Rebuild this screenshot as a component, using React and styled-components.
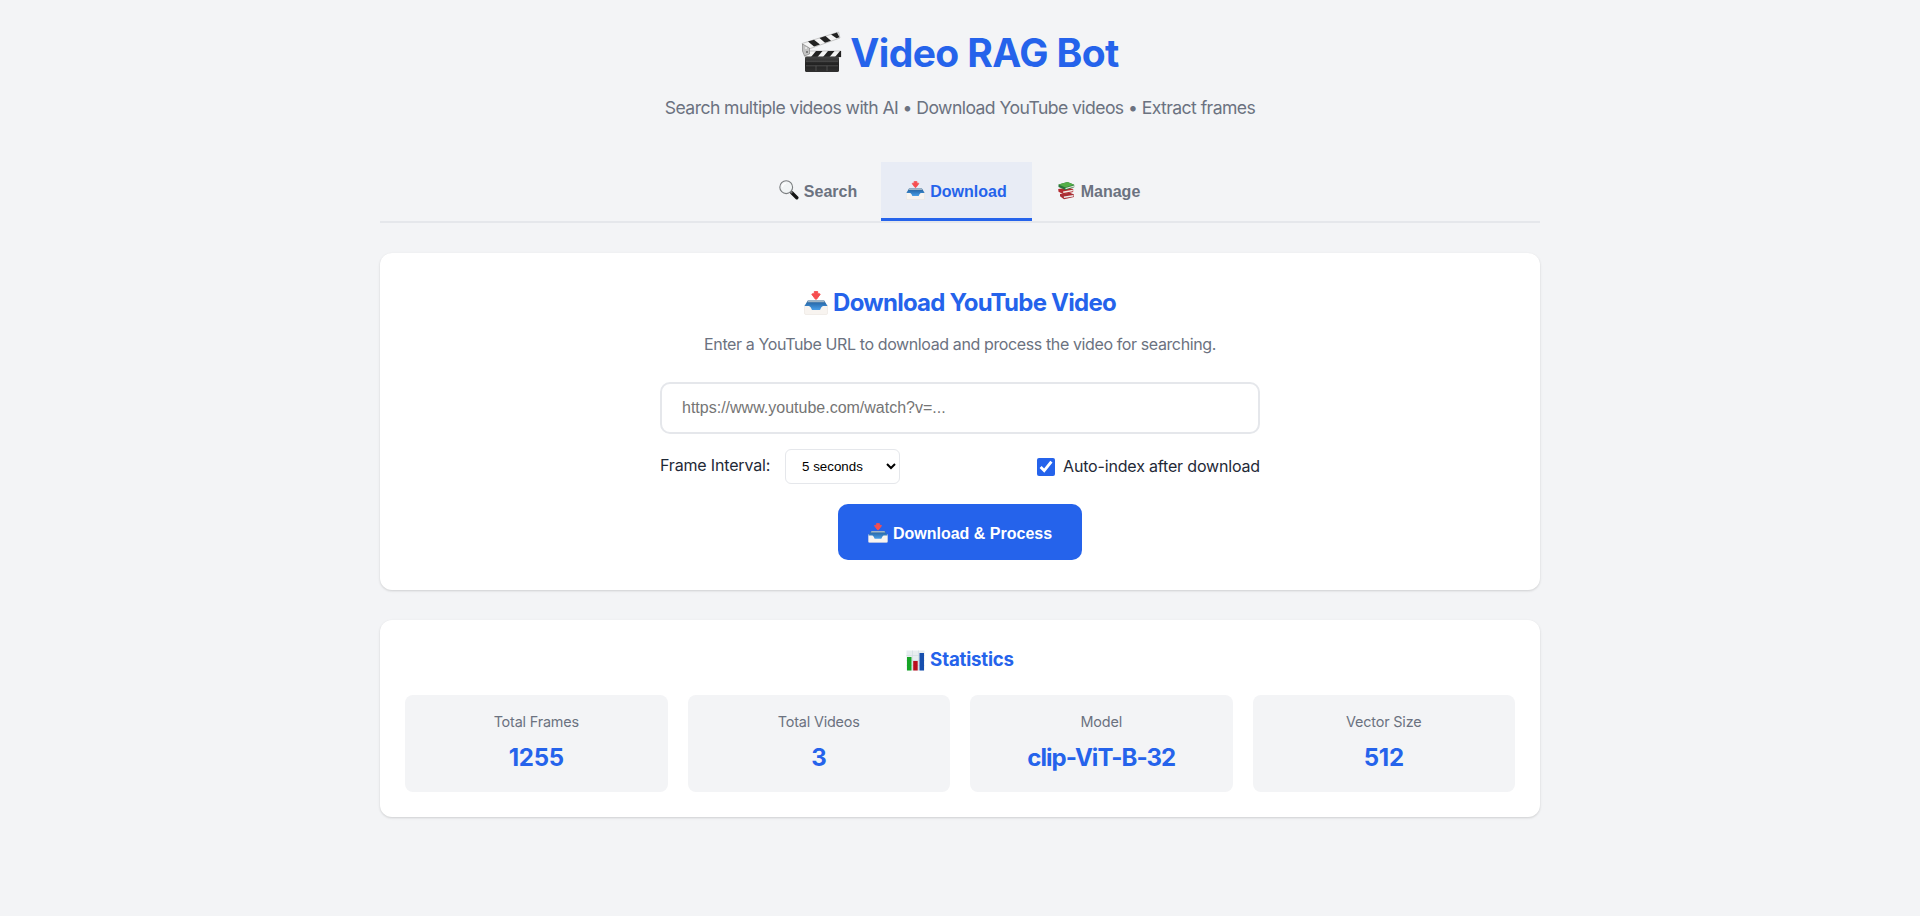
import React from 'react';
import styled, { createGlobalStyle } from 'styled-components';

const GlobalStyle = createGlobalStyle`
  * { box-sizing: border-box; margin: 0; padding: 0; }
  body {
    background: #f3f4f6;
    color: #1f2937;
    font-family: Inter, "Liberation Sans", sans-serif;
    font-size: 16px;
    line-height: 1.6;
    min-height: 100vh;
  }
`;

const Container = styled.div`
  width: 1200px;
  margin: 0 auto;
  padding: 20px;
`;

const Header = styled.header`
  display: flex;
  flex-direction: column;
  align-items: center;
  gap: 10px;
  margin-bottom: 40px;
`;

const Title = styled.h1`
  display: flex;
  align-items: center;
  gap: 8px;
  height: 64px;
  font-size: 39px;
  font-weight: 700;
  letter-spacing: -0.6px;
  color: #2563eb;
  white-space: nowrap;
  span { padding-top: 2px; }
`;

const Subtitle = styled.p`
  font-size: 17.6px;
  line-height: 28px;
  letter-spacing: -0.57px;
  color: #6b7280;
  white-space: nowrap;
`;

const Tabs = styled.nav`
  display: flex;
  justify-content: center;
  border-bottom: 2px solid #e5e7eb;
  margin-bottom: 30px;
`;

const Tab = styled.button`
  display: flex;
  align-items: center;
  justify-content: center;
  gap: 5px;
  width: ${(p) => p.$width}px;
  height: 59px;
  border: none;
  border-bottom: 3px solid ${(p) => (p.$active ? '#2563eb' : 'transparent')};
  background: ${(p) => (p.$active ? 'rgba(37, 99, 235, 0.05)' : 'transparent')};
  color: ${(p) => (p.$active ? '#2563eb' : '#6b7280')};
  font: 700 16px "Liberation Sans", sans-serif;
  span { padding-top: 3px; }
`;

const Card = styled.section`
  display: flex;
  flex-direction: column;
  align-items: center;
  padding: ${(p) => p.$padding}px;
  margin-bottom: 30px;
  background: #fff;
  border-radius: 12px;
  box-shadow: 0 1px 3px rgba(0, 0, 0, 0.1), 0 1px 2px rgba(0, 0, 0, 0.06);
`;

const CardTitle = styled.h2`
  display: flex;
  align-items: center;
  gap: 5px;
  height: 39px;
  margin-bottom: 10px;
  font-size: 24px;
  font-weight: 700;
  letter-spacing: -0.76px;
  color: #2563eb;
  span { padding-top: 1px; }
`;

const Description = styled.p`
  line-height: 25px;
  margin-bottom: 25px;
  letter-spacing: -0.385px;
  color: #6b7280;
  white-space: nowrap;
`;

const Form = styled.form`
  display: flex;
  flex-direction: column;
  align-items: center;
  width: 600px;
`;

const UrlInput = styled.input`
  width: 100%;
  height: 52px;
  padding: 0 20px;
  border: 2px solid #e5e7eb;
  border-radius: 10px;
  background: #fff;
  font: 16px "Liberation Sans", sans-serif;
  &::placeholder { color: #757575; }
`;

const Options = styled.div`
  display: flex;
  justify-content: space-between;
  align-items: center;
  width: 100%;
  height: 35px;
  margin: 15px 0 20px;
`;

const Field = styled.label`
  display: flex;
  align-items: center;
  gap: ${(p) => p.$gap}px;
  letter-spacing: -0.17px;
  white-space: nowrap;
`;

const FieldName = styled.span`
  padding-bottom: 2px;
`;

const Select = styled.select`
  width: 115px;
  height: 35px;
  padding: 0 12px;
  border: 1px solid #e5e7eb;
  border-radius: 6px;
  background: #fff;
  color: #000;
  font: 13.333px "Liberation Sans", sans-serif;
`;

const Checkbox = styled.input`
  width: 18px;
  height: 18px;
  accent-color: #2563eb;
`;

const SubmitButton = styled.button`
  display: flex;
  align-items: center;
  justify-content: center;
  gap: 5px;
  width: 244px;
  height: 56px;
  border: none;
  border-radius: 10px;
  background: #2563eb;
  color: #fff;
  font: 700 16px "Liberation Sans", sans-serif;
  padding-top: 1px;
  span { padding-top: 2px; }
`;

const StatsTitle = styled.h3`
  display: flex;
  align-items: center;
  gap: 5px;
  height: 30px;
  margin-bottom: 20px;
  font-size: 18.7px;
  font-weight: 700;
  letter-spacing: -0.2px;
  color: #2563eb;
`;

const StatsGrid = styled.div`
  display: grid;
  grid-template-columns: repeat(4, 1fr);
  gap: 20px;
  width: 100%;
`;

const Stat = styled.div`
  padding: 15px;
  border-radius: 8px;
  background: #f3f4f6;
  text-align: center;
`;

const StatLabel = styled.div`
  font-size: 14.4px;
  line-height: 23px;
  margin-bottom: 5px;
  letter-spacing: -0.18px;
  color: #6b7280;
`;

const StatValue = styled.div`
  font-size: 24px;
  line-height: 39px;
  font-weight: 700;
  letter-spacing: ${(p) => (p.$numeric ? '-0.3px' : '-0.95px')};
  color: #2563eb;
`;

const Icon = styled.svg`
  flex: none;
  display: block;
`;

function ClapperIcon() {
  return (
    <Icon width="41" height="42" viewBox="0 0 41 42">
      <defs>
        <linearGradient id="slate" x1="0" y1="0" x2="0" y2="1">
          <stop offset="0" stopColor="#444" />
          <stop offset="0.5" stopColor="#222" />
          <stop offset="1" stopColor="#303030" />
        </linearGradient>
      </defs>
      <path d="M1 12.5 37.5 1l1.5 6L5 19z" fill="#f4f4f4" stroke="#999" strokeWidth=".5" />
      <path d="m7 10.6 6-1.9 6 4.8-6 2zM18.5 7l6-1.9 5.5 4.6-6 2zM30 3.4l6-1.9 2.5 4.8-3 1z" fill="#222" />
      <path d="M4 20h36v6H4z" fill="#f4f4f4" stroke="#999" strokeWidth=".5" />
      <path d="m10 26 5-6h6.5l-5 6zm12 0 5-6h6.5l-5 6zm12 0 5-6h1v6z" fill="#222" />
      <path d="m1.5 13 7 4v6l-5 2-2-5z" fill="#c2c2c2" stroke="#777" strokeWidth=".6" />
      <circle cx="5" cy="17" r="1" fill="#eee" /><circle cx="6" cy="21" r="1" fill="#666" />
      <rect x="4" y="25.5" width="34" height="15.5" rx="1.6" fill="url(#slate)" />
      <path d="M5 30.2h32M5 34.8h32M15 34.8v5M26 34.8v5" stroke="#666" strokeWidth=".6" />
    </Icon>
  );
}

function SearchIcon() {
  return (
    <Icon width="20" height="20" viewBox="0 0 20 20">
      <path d="m12.8 12.8 5 5" stroke="#151515" strokeWidth="3.4" strokeLinecap="round" />
      <path d="m11.3 11.3 2 2" stroke="#777" strokeWidth="1.5" />
      <circle cx="7.2" cy="7.2" r="6.4" fill="#f1f4f5" stroke="#7b7e80" strokeWidth="1.1" />
      <path d="M3.5 7A4 4 0 0 1 7 3.3" stroke="#fff" strokeWidth="1.2" fill="none" />
    </Icon>
  );
}

function InboxIcon({ size }) {
  return (
    <Icon width={size} height={size} viewBox="0 0 24 24">
      <defs>
        <linearGradient id="tray" x1="0" y1="0" x2="0" y2="1">
          <stop offset="0" stopColor="#2b6298" />
          <stop offset="0.4" stopColor="#2f75b8" />
          <stop offset="1" stopColor="#4a9fe8" />
        </linearGradient>
      </defs>
      <path d="M.5 14h23v8.2q0 1.3-1.3 1.3H1.8Q.5 23.500.5 22.200z" fill="#f8f4f0" stroke="#e6e0da" strokeWidth=".5" />
      <path d="M3.8 9.500h16.400L23.500 15h-4.300q-1.200 0-2 1.500L16 19H8l-1.200-2.500q-.8-1.500-2-1.500H.5z" fill="url(#tray)" />
      <path d="M4.200 9.500h15.600l1 1.800H3.200z" fill="#9fb5c6" />
      <path d="M10.300.8q0-.6.6-.6h2.200q.6 0 .6.6v2h1.800q1.100 0 .4.9L12.700 8q-.7.800-1.400 0L8.100 3.700q-.7-.9.4-.9h1.800z" fill="#f64e50" stroke="#f64e50" strokeWidth="1" />
    </Icon>
  );
}

function BooksIcon() {
  return (
    <Icon width="19" height="19" viewBox="0 0 19 19">
      <path d="m3 13 10-1.200 4 1.600v2.700L7 18.200l-4-3z" fill="#a92e35" />
      <path d="m6.800 15.400 9.700-1.500v1.500l-9.500 1.700z" fill="#eee" />
      <path d="m1.200 8 10-1.200 5 1.300v3L6.500 13.300 1.500 10.700z" fill="#b52c32" />
      <path d="m6 10.400 9.800-1.600v1.500l-9.400 1.800z" fill="#f3eee8" />
      <path d="M1.500 3.600 10.500 1l6.700 2.800v2.400L8.500 9 1.500 6z" fill="#28743b" />
      <path d="M1.500 3.600 10.500 1l6.700 2.800-8.800 2.700z" fill="#55ae48" />
      <path d="m8.500 7 8.500-2.500v1.200L8.500 8.300z" fill="#e5eadb" />
    </Icon>
  );
}

function ChartIcon() {
  return (
    <Icon width="19" height="21" viewBox="0 0 19 21">
      <path d="M.5.5h18v20H.5z" fill="#e7edf0" />
      <path d="M.5 5.500h18M.5 10.500h18M.5 15.500h18M6.500.5v20M12.500.5v20" stroke="#cfd9df" strokeWidth=".6" />
      <path d="M1 7h4.500v13.500H1z" fill="#17a526" />
      <path d="M7.200 11h4.500v9.500H7.200z" fill="#b90f1c" />
      <path d="M13.500 3H18v17.500h-4.500z" fill="#174fae" />
    </Icon>
  );
}

const stats = [
  { label: 'Total Frames', value: '1255', numeric: true },
  { label: 'Total Videos', value: '3', numeric: true },
  { label: 'Model', value: 'clip-ViT-B-32', numeric: false },
  { label: 'Vector Size', value: '512', numeric: true },
];

export default function App() {
  return (
    <>
      <GlobalStyle />
      <Container>
        <Header>
          <Title><ClapperIcon /><span>Video RAG Bot</span></Title>
          <Subtitle>Search multiple videos with AI • Download YouTube videos • Extract frames</Subtitle>
        </Header>
        <Tabs>
          <Tab $width={126}><SearchIcon /><span>Search</span></Tab>
          <Tab $width={151} $active><InboxIcon size={19} /><span>Download</span></Tab>
          <Tab $width={133}><BooksIcon /><span>Manage</span></Tab>
        </Tabs>
        <Card $padding={30}>
          <CardTitle><InboxIcon size={24} /><span>Download YouTube Video</span></CardTitle>
          <Description>Enter a YouTube URL to download and process the video for searching.</Description>
          <Form onSubmit={(e) => e.preventDefault()}>
            <UrlInput placeholder="https://www.youtube.com/watch?v=..." />
            <Options>
              <Field $gap={15}>
                <FieldName>Frame Interval:</FieldName>
                <Select defaultValue="5"><option value="5">5 seconds</option></Select>
              </Field>
              <Field $gap={8}>
                <Checkbox type="checkbox" defaultChecked />
                <span>Auto-index after download</span>
              </Field>
            </Options>
            <SubmitButton type="submit"><InboxIcon size={20} /><span>Download &amp; Process</span></SubmitButton>
          </Form>
        </Card>
        <Card $padding={25}>
          <StatsTitle><ChartIcon /><span>Statistics</span></StatsTitle>
          <StatsGrid>
            {stats.map((s) => (
              <Stat key={s.label}>
                <StatLabel>{s.label}</StatLabel>
                <StatValue $numeric={s.numeric}>{s.value}</StatValue>
              </Stat>
            ))}
          </StatsGrid>
        </Card>
      </Container>
    </>
  );
}
